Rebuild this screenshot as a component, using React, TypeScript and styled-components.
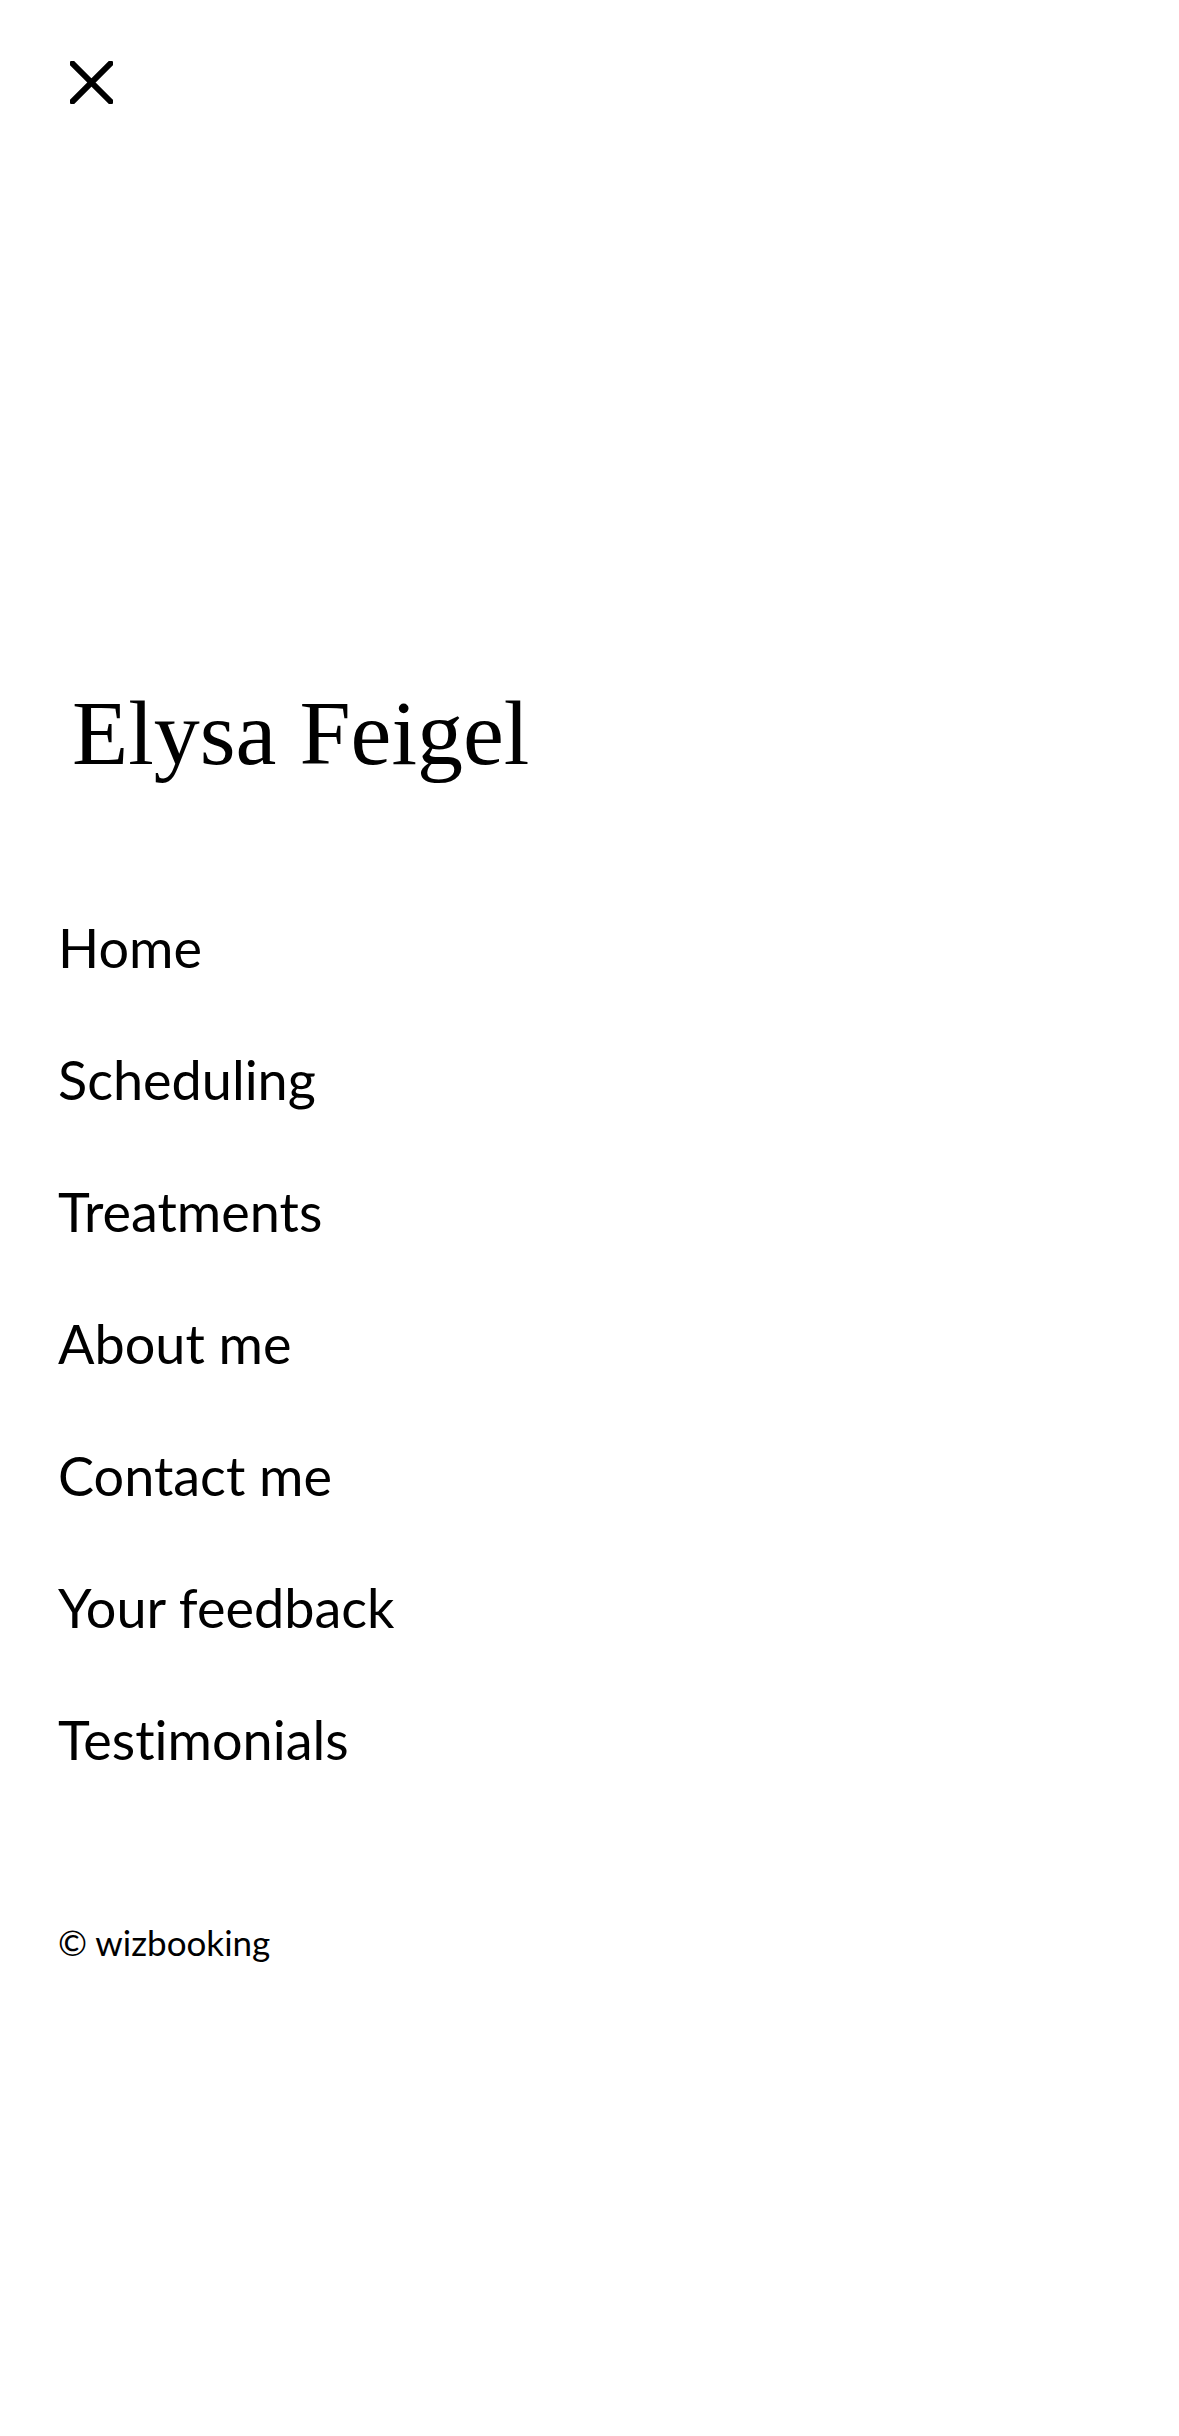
import React from "react";
import styled, { createGlobalStyle } from "styled-components";

const Global = createGlobalStyle`
  html, body {
    margin: 0;
    padding: 0;
    background: #ffffff;
  }
  body {
    font-family: Lato, "Open Sans", sans-serif;
    color: #000000;
  }
`;

const Page = styled.div`
  min-height: 2436px;
  background: #ffffff;
  display: flex;
  flex-direction: column;
  padding: 0 58px;
  box-sizing: border-box;
`;

const CloseButton = styled.button`
  margin: 61px 0 0 12px;
  padding: 0;
  width: 43px;
  height: 43px;
  border: none;
  background: transparent;
  display: flex;
  cursor: pointer;
  align-self: flex-start;
`;

const Title = styled.h1`
  margin: 583px 0 0 14px;
  font-family: "Liberation Serif", "Times New Roman", serif;
  font-weight: 400;
  font-size: 92px;
  line-height: 92px;
  color: #000;
`;

const Nav = styled.nav`
  margin-top: 103px;
  display: flex;
  flex-direction: column;
`;

const NavLink = styled.a`
  font-family: Lato, sans-serif;
  font-size: 54px;
  line-height: 132px;
  color: #000;
  text-decoration: none;
  font-variant-ligatures: no-common-ligatures;
  font-feature-settings: "liga" 0;
`;

const Footer = styled.div`
  margin-top: 115px;
  font-family: Lato, sans-serif;
  font-size: 35px;
  line-height: 42px;
  color: #000;
`;

const items = [
  "Home",
  "Scheduling",
  "Treatments",
  "About me",
  "Contact me",
  "Your feedback",
  "Testimonials",
];

export default function App() {
  return (
    <>
      <Global />
      <Page>
        <CloseButton aria-label="Close">
          <svg width="43" height="43" viewBox="0 0 43 43">
            <path d="M2.5 2.5 L40.5 40.5 M40.5 2.5 L2.5 40.5" stroke="#000" strokeWidth="6" strokeLinecap="square" fill="none" />
          </svg>
        </CloseButton>
        <Title>Elysa Feigel</Title>
        <Nav>
          {items.map((t) => (
            <NavLink key={t} href="#">
              {t}
            </NavLink>
          ))}
        </Nav>
        <Footer>© wizbooking</Footer>
      </Page>
    </>
  );
}
